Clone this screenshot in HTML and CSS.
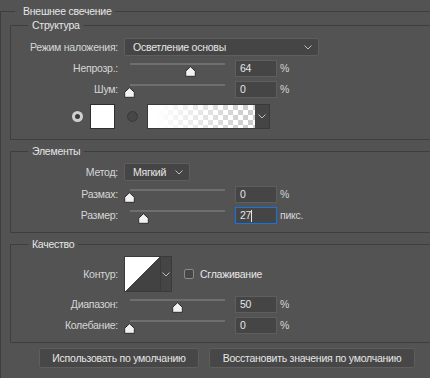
FILE: index.html
```html
<!DOCTYPE html>
<html lang="ru">
<head>
  <meta charset="UTF-8">
  <title>Внешнее свечение</title>
  <link rel="stylesheet" href="styles.css">
</head>
<body>
  <fieldset class="group outer">
    <legend>Внешнее свечение</legend>

    <!-- Структура -->
    <fieldset class="group section first">
      <legend>Структура</legend>
      <div class="row">
        <span class="lbl">Режим наложения:</span>
        <div class="select blend">
          <span>Осветление основы</span>
          <svg class="chev" width="8" height="5" viewBox="0 0 8 5"><path d="M0.5 0.5 L4 4 L7.5 0.5" fill="none" stroke="#bdbdbd"/></svg>
        </div>
      </div>
      <div class="row gap4">
        <span class="lbl">Непрозр.:</span>
        <div class="slider"><div class="track"></div><svg class="thumb" style="left:64%" width="11" height="11" viewBox="0 0 11 11"><path d="M5.5 0.7 L10.3 5.2 V10.3 H0.7 V5.2 Z" fill="#f2f2f2" stroke="#2e2e2e" stroke-linejoin="round"/></svg></div>
        <div class="num">64</div><span class="unit">%</span>
      </div>
      <div class="row gap4">
        <span class="lbl">Шум:</span>
        <div class="slider"><div class="track"></div><svg class="thumb" style="left:0%" width="11" height="11" viewBox="0 0 11 11"><path d="M5.5 0.7 L10.3 5.2 V10.3 H0.7 V5.2 Z" fill="#f2f2f2" stroke="#2e2e2e" stroke-linejoin="round"/></svg></div>
        <div class="num">0</div><span class="unit">%</span>
      </div>
      <div class="row colors">
        <span class="radio on"></span>
        <span class="swatch"></span>
        <span class="radio"></span>
        <div class="gradient">
          <span class="grad-fill"></span>
          <span class="grad-dd"><svg width="8" height="5" viewBox="0 0 8 5"><path d="M0.5 0.5 L4 4 L7.5 0.5" fill="none" stroke="#bdbdbd"/></svg></span>
        </div>
      </div>
    </fieldset>

    <!-- Элементы -->
    <fieldset class="group section">
      <legend>Элементы</legend>
      <div class="row">
        <span class="lbl">Метод:</span>
        <div class="select method">
          <span>Мягкий</span>
          <svg class="chev" width="8" height="5" viewBox="0 0 8 5"><path d="M0.5 0.5 L4 4 L7.5 0.5" fill="none" stroke="#bdbdbd"/></svg>
        </div>
      </div>
      <div class="row gap5">
        <span class="lbl">Размах:</span>
        <div class="slider"><div class="track"></div><svg class="thumb" style="left:0%" width="11" height="11" viewBox="0 0 11 11"><path d="M5.5 0.7 L10.3 5.2 V10.3 H0.7 V5.2 Z" fill="#f2f2f2" stroke="#2e2e2e" stroke-linejoin="round"/></svg></div>
        <div class="num">0</div><span class="unit">%</span>
      </div>
      <div class="row gap4">
        <span class="lbl">Размер:</span>
        <div class="slider"><div class="track"></div><svg class="thumb" style="left:15%" width="11" height="11" viewBox="0 0 11 11"><path d="M5.5 0.7 L10.3 5.2 V10.3 H0.7 V5.2 Z" fill="#f2f2f2" stroke="#2e2e2e" stroke-linejoin="round"/></svg></div>
        <div class="num focus">27<span class="caret"></span></div><span class="unit">пикс.</span>
      </div>
    </fieldset>

    <!-- Качество -->
    <fieldset class="group section">
      <legend>Качество</legend>
      <div class="row">
        <span class="lbl">Контур:</span>
        <div class="contour">
          <span class="curve"></span>
          <span class="curve-dd"><svg width="8" height="5" viewBox="0 0 8 5"><path d="M0.5 0.5 L4 4 L7.5 0.5" fill="none" stroke="#bdbdbd"/></svg></span>
        </div>
        <span class="check"></span>
        <span class="check-text">Сглаживание</span>
      </div>
      <div class="row gap4">
        <span class="lbl">Диапазон:</span>
        <div class="slider"><div class="track"></div><svg class="thumb" style="left:50%" width="11" height="11" viewBox="0 0 11 11"><path d="M5.5 0.7 L10.3 5.2 V10.3 H0.7 V5.2 Z" fill="#f2f2f2" stroke="#2e2e2e" stroke-linejoin="round"/></svg></div>
        <div class="num">50</div><span class="unit">%</span>
      </div>
      <div class="row gap4">
        <span class="lbl">Колебание:</span>
        <div class="slider"><div class="track"></div><svg class="thumb" style="left:0%" width="11" height="11" viewBox="0 0 11 11"><path d="M5.5 0.7 L10.3 5.2 V10.3 H0.7 V5.2 Z" fill="#f2f2f2" stroke="#2e2e2e" stroke-linejoin="round"/></svg></div>
        <div class="num">0</div><span class="unit">%</span>
      </div>
    </fieldset>

    <!-- Кнопки -->
    <div class="buttons">
      <button type="button" class="btn btn-default">Использовать по умолчанию</button>
      <button type="button" class="btn btn-reset">Восстановить значения по умолчанию</button>
    </div>
  </fieldset>
</body>
</html>
```

FILE: styles.css
```css
:root {
  --bg:       #535353;
  --line:     #3e3e3e;
  --field:    #454545;
  --field-bd: #5e5e5e;
  --text:     #d6d6d6;
  --bright:   #e6e6e6;
  --blue:     #1473e6;
}
* { box-sizing: border-box; }
body {
  margin: 0;
  background: var(--bg);
  color: var(--text);
  font-family: "Liberation Sans", Arial, sans-serif;
  font-size: 10.5px;
  letter-spacing: -0.25px;
  line-height: 13px;
  overflow: hidden;
}
/* группы */
.group {
  margin: 0;
  padding: 0;
  border: 1px solid var(--line);
  border-right: none;
  min-width: 0;
}
.group > legend {
  padding: 0 4px;
  margin-left: 17px;
  line-height: 13px;
  color: var(--bright);
}
.outer {
  margin-top: 5px;
  border-bottom: none;
  padding-bottom: 20px;
}
.outer > legend {
  margin-left: 14px;
  padding: 0 4px 0 8px;
}
.section {
  margin: 5px 0 0 9px;
  padding: 5px 0 8px;
}
.section.first {
  margin-top: 1px;
  padding: 6px 0 10px;
}
/* строки */
.row {
  display: flex;
  align-items: center;
}
.gap4 { margin-top: 4px; }
.gap5 { margin-top: 5px; }
.lbl {
  width: 107px;
  flex: none;
  text-align: right;
}
/* выпадающие списки */
.select {
  height: 18px;
  margin-left: 6px;
  padding: 0 6px 0 8px;
  background: var(--field);
  border: 1px solid var(--field-bd);
  border-radius: 2px;
  display: flex;
  align-items: center;
  justify-content: space-between;
  color: var(--bright);
}
.blend { width: 195px; }
.method { width: 66px; }
.chev { display: block; }
/* слайдеры */
.slider {
  position: relative;
  width: 95px;
  height: 17px;
  margin-left: 12px;
  padding-top: 3px;
}
.track {
  height: 2px;
  background: #6f6f6f;
}
.thumb {
  position: absolute;
  top: 6px;
  margin-left: -6px;
  display: block;
}
.num {
  width: 42px;
  height: 17px;
  margin-left: 10px;
  padding-left: 4px;
  background: var(--field);
  border: 1px solid var(--field-bd);
  color: var(--bright);
  display: flex;
  align-items: center;
}
.num.focus { border-color: var(--blue); }
.caret {
  width: 1px;
  height: 12px;
  background: #e8e8e8;
}
.unit { margin-left: 3px; }
/* цвет */
.colors {
  margin-top: 6px;
  padding-left: 61px;
}
.radio {
  width: 11px;
  height: 11px;
  border-radius: 50%;
  background: #474747;
  border: 1px solid #393939;
  flex: none;
}
.radio.on {
  background: #3a3a3a;
  border: 3px solid #cfcfcf;
}
.swatch {
  width: 25px;
  height: 25px;
  margin: 0 12px 0 7px;
  background: #fff;
  border: 1px solid #2e2e2e;
}
.gradient {
  display: flex;
  height: 25px;
  margin-left: 9px;
  border: 1px solid #3a3a3a;
}
.grad-fill {
  width: 107px;
  background:
    linear-gradient(to right, #fff 8%, rgba(255, 255, 255, 0) 92%),
    repeating-conic-gradient(#cdcdcd 0 25%, #fff 0 50%) 0 0 / 10px 10px;
}
.grad-dd {
  width: 14px;
  background: var(--field);
  display: flex;
  align-items: center;
  justify-content: center;
}
/* контур */
.contour {
  display: flex;
  width: 48px;
  height: 36px;
  margin-left: 6px;
  border: 1px solid #3a3a3a;
}
.curve {
  width: 35px;
  background: linear-gradient(to bottom right, #fff 50%, #424242 50%);
}
.curve-dd {
  flex: 1;
  background: var(--field);
  border-left: 1px solid #3a3a3a;
  display: flex;
  align-items: center;
  justify-content: center;
}
.check {
  width: 10px;
  height: 10px;
  margin-left: 12px;
  border: 1px solid #8a8a8a;
  border-radius: 2px;
  background: #464646;
}
.check-text {
  margin-left: 6px;
  color: var(--bright);
}
/* кнопки */
.buttons {
  display: flex;
  gap: 10px;
  margin: 5px 0 0 38px;
}
.btn {
  height: 20px;
  padding: 0;
  background: #474747;
  border: 1px solid #5e5e5e;
  border-radius: 2px;
  color: var(--bright);
  font: inherit;
  letter-spacing: inherit;
}
.btn-default { width: 160px; }
.btn-reset { width: 206px; }
```
